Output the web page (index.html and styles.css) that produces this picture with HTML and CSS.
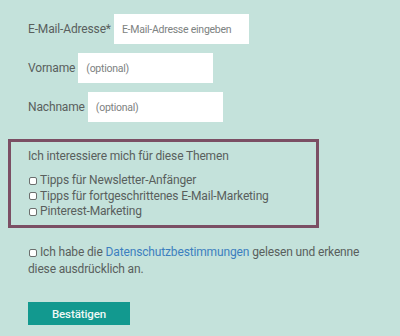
FILE: index.html
```html
<!DOCTYPE html>
<html lang="de">
<head>
<meta charset="utf-8">
<link rel="stylesheet" href="styles.css">
</head>
<body>
<form class="form">
  <div class="field">
    <label class="label">E-Mail-Adresse*</label>
    <input class="input" type="text" placeholder="E-Mail-Adresse eingeben">
  </div>
  <div class="field">
    <label class="label">Vorname</label>
    <input class="input" type="text" placeholder="(optional)">
  </div>
  <div class="field">
    <label class="label">Nachname</label>
    <input class="input" type="text" placeholder="(optional)">
  </div>
  <div class="topics">
    <div class="topics-title">Ich interessiere mich für diese Themen</div>
    <label class="check"><span class="box"></span><span>Tipps für Newsletter-Anfänger</span></label>
    <label class="check"><span class="box"></span><span>Tipps für fortgeschrittenes E-Mail-Marketing</span></label>
    <label class="check"><span class="box"></span><span>Pinterest-Marketing</span></label>
  </div>
  <div class="privacy">
    <div class="privacy-line"><span class="box"></span><span>Ich habe die</span><a class="link" href="#">Datenschutzbestimmungen</a><span>gelesen und erkenne</span></div>
    <div class="privacy-line">diese ausdrücklich an.</div>
  </div>
  <button class="submit" type="button">Bestätigen</button>
</form>
</body>
</html>
```

FILE: styles.css
```css
html, body {
  margin: 0;
  padding: 0;
  background: #c4e2db;
}
body {
  font-family: Roboto, "Liberation Sans", sans-serif;
  color: #595f5d;
  font-size: 12px;
  letter-spacing: -0.15px;
}
.form {
  padding: 14px 0 0 8px;
  width: 311px;
}
.field {
  display: flex;
  align-items: center;
  gap: 3px;
  padding-left: 20px;
  margin-bottom: 9px;
}
.input {
  box-sizing: border-box;
  width: 135px;
  height: 30px;
  border: none;
  background: #fff;
  padding: 0 8px;
  font-family: Roboto, "Liberation Sans", sans-serif;
  font-size: 10.5px;
  letter-spacing: -0.25px;
  outline: none;
}
.input::placeholder {
  color: #7d8281;
}
.topics {
  margin-top: 17px;
  border: 3px solid #7b4f64;
  padding: 6px 0 0 17px;
  box-sizing: border-box;
  height: 89px;
}
.topics-title {
  margin-bottom: 9px;
  line-height: 16px;
}
.check {
  display: flex;
  align-items: center;
  line-height: 15.5px;
}
.box {
  display: inline-block;
  flex: none;
  box-sizing: border-box;
  width: 8px;
  height: 8px;
  border: 1px solid #6b6e6d;
  border-radius: 2px;
  background: #fff;
  margin: 0 3px 0 1px;
}
.privacy {
  margin: 16px 0 0 20px;
  line-height: 17px;
  width: 345px;
}
.privacy-line {
  display: flex;
  align-items: center;
  gap: 3px;
}
.privacy-line .box {
  margin: 0 0 0 1px;
}
.link {
  color: #3c7fbf;
  text-decoration: none;
}
.submit {
  display: block;
  margin: 24px 0 0 20px;
  width: 102px;
  height: 23px;
  border: none;
  background: #12998f;
  color: #eef8f6;
  font-family: Roboto, "Liberation Sans", sans-serif;
  font-size: 11.5px;
  font-weight: 500;
  letter-spacing: -0.1px;
  padding: 0;
}
```
